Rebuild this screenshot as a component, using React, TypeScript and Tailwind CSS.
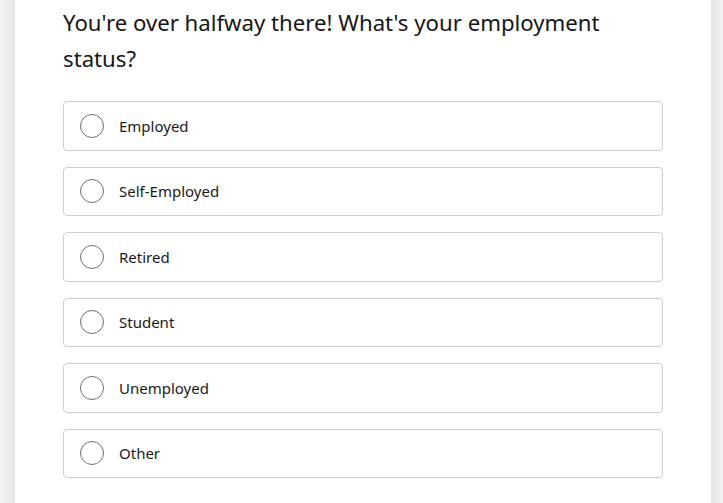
import React from "react";

const options = ["Employed", "Self-Employed", "Retired", "Student", "Unemployed", "Other"];

export default function App() {
  return (
    <div className="flex w-[723px] h-[503px] bg-white overflow-hidden" style={{ fontFamily: '"Noto Sans", sans-serif' }}>
      <div className="w-[15px] shrink-0 bg-gradient-to-r from-[#f3f3f3] to-[#e6e6e6]" />
      <div className="flex-1 bg-white pl-[48px] pr-[48px]">
        <h1 className="text-[22.2px] leading-[36px] text-[#161616] pt-[5px] font-normal">
          You're over halfway there! What's your employment status?
        </h1>
        <div className="mt-[24px] flex flex-col gap-[16px] w-[600px]">
          {options.map((o) => (
            <label key={o} className="flex items-center h-[49.5px] border border-[#cfcfcf] rounded-[4px] pl-[16px]">
              <span className="w-[24px] h-[24px] rounded-full border border-[#6f6f6f] bg-white shrink-0" />
              <span className="ml-[15px] text-[15px] text-[#1a1a1a]">{o}</span>
            </label>
          ))}
        </div>
      </div>
      <div className="w-[13px] shrink-0 bg-gradient-to-r from-[#e6e6e6] to-[#f4f4f4]" />
    </div>
  );
}
